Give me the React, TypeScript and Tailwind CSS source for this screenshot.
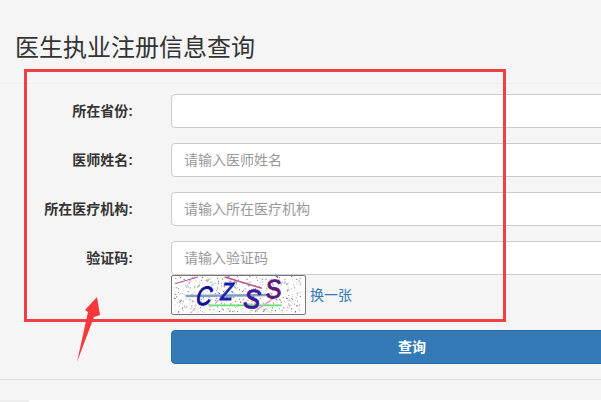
const FONT = "font-['Liberation_Sans','Noto_Sans_CJK_SC',sans-serif]";

function rng(seed: number) {
  let s = seed;
  return () => {
    s = (s * 16807) % 2147483647;
    return s / 2147483647;
  };
}

const noise = (() => {
  const r = rng(4242);
  const colors = ["#222222", "#333333", "#555555", "#b48ad0", "#8fc98f", "#d8c070", "#8aa8d8", "#444444"];
  const out: { x: number; y: number; c: string }[] = [];
  for (let i = 0; i < 480; i++) {
    out.push({ x: Math.floor(r() * 134), y: Math.floor(r() * 39), c: colors[Math.floor(r() * colors.length)] });
  }
  return out;
})();

function Captcha() {
  return (
    <svg width="135" height="40" viewBox="0 0 135 40" className="block shrink-0 rounded-[2px] border border-[#777777] bg-white">
      {noise.map((d, i) => (
        <rect key={i} x={d.x} y={d.y} width="1" height="1" fill={d.c} opacity="0.8" />
      ))}
      <path d="M1 8 L25 1" stroke="#b040b0" strokeWidth="1" fill="none" />
      <path d="M53 1 L92 13" stroke="#b8508f" strokeWidth="1.6" fill="none" />
      <path d="M12 21 L101 20" stroke="#7f9fc4" strokeWidth="2.6" fill="none" />
      <path d="M37 31 L113 31" stroke="#62e070" strokeWidth="1.8" fill="none" />
      <path d="M85 37 L112 18" stroke="#d8a8c8" strokeWidth="1.6" fill="none" />
      <g fontFamily="'Liberation Sans', sans-serif" fontStyle="italic" fontSize="28" strokeWidth="1.1">
        <text transform="translate(22 30) skewX(-8) scale(0.8 1)" fill="#10109a" stroke="#10109a">C</text>
        <text transform="translate(48 25) skewX(-6) scale(0.8 1)" fontSize="26" fill="#1c1cae" stroke="#1c1cae">Z</text>
        <text transform="translate(72 33) rotate(6) scale(0.95 1)" fill="#3f1a9a" stroke="#3f1a9a">S</text>
        <text transform="translate(97 24) rotate(-6) scale(0.95 1.05)" fontSize="26" fill="#5e1a7a" stroke="#5e1a7a">S</text>
      </g>
    </svg>
  );
}

function Row({ label, placeholder, className }: { label: string; placeholder?: string; className: string }) {
  return (
    <div className={`flex items-center ${className}`}>
      <label className="w-[134px] shrink-0 pr-px text-right text-[14px] font-bold leading-[20px] text-[#333333]">{label}</label>
      <input
        readOnly
        placeholder={placeholder}
        className="ml-[37px] h-[34px] w-[520px] shrink-0 rounded-[4px] border border-[#cccccc] bg-white px-3 text-[14px] text-[#555555] outline-none placeholder:text-[#999999]"
      />
    </div>
  );
}

export default function App() {
  return (
    <div className={`relative h-[402px] w-[601px] overflow-hidden bg-[#f5f5f5] ${FONT}`}>
      <header className="h-[84px] border-b border-[#eeeeee] pl-[15px] pt-[31px]">
        <h1 className="text-[24px] font-normal leading-[34px] text-[#333333]">医生执业注册信息查询</h1>
      </header>
      <form className="pt-[10px]">
        <Row label="所在省份:" className="" />
        <Row label="医师姓名:" placeholder="请输入医师姓名" className="mt-[15px]" />
        <Row label="所在医疗机构:" placeholder="请输入所在医疗机构" className="mt-[15px]" />
        <Row label="验证码:" placeholder="请输入验证码" className="mt-[15px]" />
        <div className="ml-[171px] flex items-center">
          <Captcha />
          <a className="ml-1 text-[14px] leading-[20px] text-[#337ab7]">换一张</a>
        </div>
        <button
          type="button"
          className="ml-[171px] mt-[15px] block h-[34px] w-[520px] rounded-[4px] border border-[#2e6da4] bg-[#337ab7] text-center text-[14px] font-bold text-white"
        >
          <span className="relative -left-[19px]">查询</span>
        </button>
      </form>
      <div className="mt-[15px] h-px bg-[#dddddd]" />
      <div className="absolute bottom-0 left-0 flex h-[2px] w-full">
        <div className="w-[29px] bg-[#eeeeee]" />
        <div className="flex-1 bg-white" />
      </div>

      {/* annotation overlay */}
      <div className="pointer-events-none absolute left-[24px] top-[69px] h-[253px] w-[482px] border-[3px] border-[#f04045]" />
      <svg className="pointer-events-none absolute left-[70px] top-[290px]" width="40" height="80" viewBox="0 0 40 80">
        <path d="M27 7 L30 25 L24 27 L7 72 L18 22 L15 20 Z" fill="#f8383b" />
      </svg>
    </div>
  );
}
